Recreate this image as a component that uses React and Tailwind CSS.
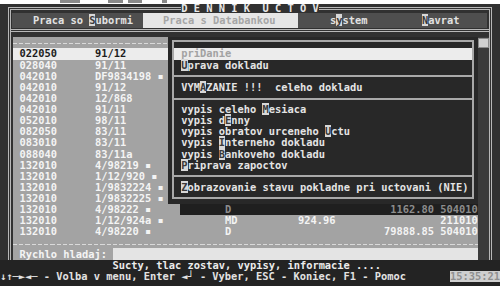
import React from 'react';

const rows = [
  { code: '022050', doc: '91/12', sel: true },
  { code: '028040', doc: '91/11' },
  { code: '042010', doc: 'DF9834198 ▪' },
  { code: '042010', doc: '91/12' },
  { code: '042010', doc: '12/868' },
  { code: '042010', doc: '91/11' },
  { code: '052010', doc: '98/11' },
  { code: '082050', doc: '83/11' },
  { code: '083010', doc: '83/11' },
  { code: '088040', doc: '83/11a' },
  { code: '132010', doc: '4/98219 ▪' },
  { code: '132010', doc: '1/12/920 ▪' },
  { code: '132010', doc: '1/9832224 ▪' },
  { code: '132010', doc: '1/9832225 ▪' },
  { code: '132010', doc: '4/98222 ▪', type: 'D', cr: '1162.80', acc: '504010', shade: true },
  { code: '132010', doc: '1/12/924a ▪', type: 'MD', dr: '924.96', acc: '211010' },
  { code: '132010', doc: '4/98220 ▪', type: 'D', cr: '79888.85', acc: '504010' },
];

// inverted hotkey letter, like the DOS menus
const Hot = ({ children }) => <span className="bg-[#d8d8d8] text-[#3a3a3a]">{children}</span>;

const Dashes = () => (
  <div className="h-[1px] bg-[repeating-linear-gradient(90deg,#dadada_0px,#dadada_4px,transparent_4px,transparent_6.25px)]" />
);

const PopRow = ({ children, sel }) => (
  <div className={`h-[11.125px] leading-[11.125px] pl-[7.25px] whitespace-pre ${sel ? 'bg-[#ececec] text-[#a2a2a2]' : 'text-[#e4e4e4]'}`}>
    {children}
  </div>
);

const PopSep = () => (
  <div className="h-[11.125px] flex items-center">
    <div className="h-[2px] w-full bg-[#a9a9a9]" />
  </div>
);

function ListRow({ r }) {
  const bg = r.sel
    ? 'bg-[#ececec] text-[#1c1c1c]'
    : r.shade
      ? 'bg-[linear-gradient(90deg,transparent_167px,#1f1f1f_167px)] text-[#f4f4f4]'
      : 'text-[#f4f4f4]';
  const right = r.shade ? 'text-[#8c8c8c]' : '';
  return (
    <div className={`flex h-[11.125px] leading-[11.125px] pl-[6.5px] whitespace-pre ${bg}`}>
      <span className="w-[75.5px]">{r.code}</span>
      <span className="w-[130px]">{r.doc}</span>
      <span className={`w-[50px] ${right}`}>{r.type || ''}</span>
      <span className={`w-[60.5px] text-right ${right}`}>{r.dr || ''}</span>
      <span className={`w-[98.5px] text-right ${right}`}>{r.cr || ''}</span>
      <span className="w-[6.25px]" />
      <span className={`w-[37.5px] ${right}`}>{r.acc || ''}</span>
    </div>
  );
}

export default function App() {
  return (
    <div className="w-[500px] h-[286px] overflow-hidden bg-[#313131] font-['DejaVu_Sans_Mono','Liberation_Mono',monospace] font-bold text-[10.38px] leading-[11.125px] text-[#e6e6e6]">
      {/* scanned top edge */}
      <div className="h-[4px] bg-white flex">
        <div className="ml-[60px] w-[20px] h-[3px] bg-[#8a8a8a]" />
        <div className="ml-[28px] w-[15px] h-[3px] bg-[#8a8a8a]" />
        <div className="ml-[5px] w-[14px] h-[3px] bg-[#8a8a8a]" />
        <div className="ml-[20px] w-[5px] h-[3px] bg-[#8a8a8a]" />
      </div>

      {/* outer window frame */}
      <div className="mx-[8px] mt-[3px] border-x-[3px] border-t-[3px] border-double border-[#b8b8b8]">
        <div className="-mt-[6px] h-[9px] leading-[9px] flex justify-center">
          <span className="h-[9px] bg-[#313131] text-[#e8e8e8] whitespace-pre">D E N N I K  U C T O V</span>
        </div>

        {/* menu bar */}
        <div className="ml-[1px] mr-[2px] h-[15px] leading-[15px] bg-[#4f4f4f] flex whitespace-pre text-[#e2e2e2]">
          <span className="ml-[21px]">Praca so <Hot>S</Hot>ubormi</span>
          <span className="ml-[10px] w-[155px] pl-[20px] bg-[#e6e6e6] text-[#a6a6a6]">Praca s Databankou</span>
          <span className="ml-[32px]">s<Hot>y</Hot>stem</span>
          <span className="ml-[54.5px]"><Hot>N</Hot>avrat</span>
        </div>
        <div className="h-[1px]" />
        <div className="h-[3px] border-y border-[#b8b8b8]" />
        <div className="h-[5.4px]" />

        <div className="flex">
          <div className="w-[2px]" />
          {/* account list */}
          <div className="relative w-[465px] bg-[#a3a3a3]">
            <div className="h-[5.6px]" />
            <Dashes />
            <div className="h-[4.5px]" />
            {rows.map((r, i) => (
              <ListRow key={i} r={r} />
            ))}
            <div className="h-[6.4px]" />
            <Dashes />
            <div className="h-[3px]" />
            <div className="flex h-[12px] leading-[12px] pl-[6.5px] text-[#f4f4f4] whitespace-pre">
              <span className="w-[93.5px]">Rychlo hladaj:</span>
              <div className="flex-1 bg-[#e4e4e4]" />
            </div>

            {/* pull-down menu over the list */}
            <div className="absolute left-[155px] top-0 w-[310px] h-[167.1px] bg-[#282828] px-[4px] pt-[2.6px]">
              <div className="border-2 border-[#a9a9a9] pt-[6.5px] pb-[3.6px]">
                <PopRow sel>priDanie</PopRow>
                <PopRow><Hot>U</Hot>prava dokladu</PopRow>
                <PopSep />
                <PopRow>VYM<Hot>A</Hot>ZANIE !!!  celeho dokladu</PopRow>
                <PopSep />
                <PopRow>vypis celeho <Hot>M</Hot>esiaca</PopRow>
                <PopRow>vypis d<Hot>E</Hot>nny</PopRow>
                <PopRow>vypis obratov urceneho <Hot>U</Hot>ctu</PopRow>
                <PopRow>vypis <Hot>I</Hot>nterneho dokladu</PopRow>
                <PopRow>vypis <Hot>B</Hot>ankoveho dokladu</PopRow>
                <PopRow><Hot>P</Hot>riprava zapoctov</PopRow>
                <PopSep />
                <PopRow><Hot>Z</Hot>obrazovanie stavu pokladne pri uctovani (NIE)</PopRow>
              </div>
            </div>
          </div>

          {/* scroll bar */}
          <div className="w-[11px] bg-[#3b3b3b] pt-[0.6px]">
            <div className="h-[10px] bg-[#d0d0d0] border border-[#8a8a8a]" />
          </div>
        </div>
      </div>

      {/* status lines */}
      <div className="bg-[#232323] h-[26px]">
        <div className="h-[11.125px] pl-[112.5px] whitespace-pre text-[#ececec]">Sucty, tlac zostav, vypisy, informacie ....</div>
        <div className="h-[11.125px] flex justify-between whitespace-pre text-[#e2e2e2]">
          <span>↓↑─►◄─ - Volba v menu, Enter ◄┘ - Vyber, ESC - Koniec, F1 - Pomoc</span>
          <span className="w-[50px] bg-[#cfcfcf] text-[#8f8f8f] text-center">15:35:21</span>
        </div>
      </div>
    </div>
  );
}
